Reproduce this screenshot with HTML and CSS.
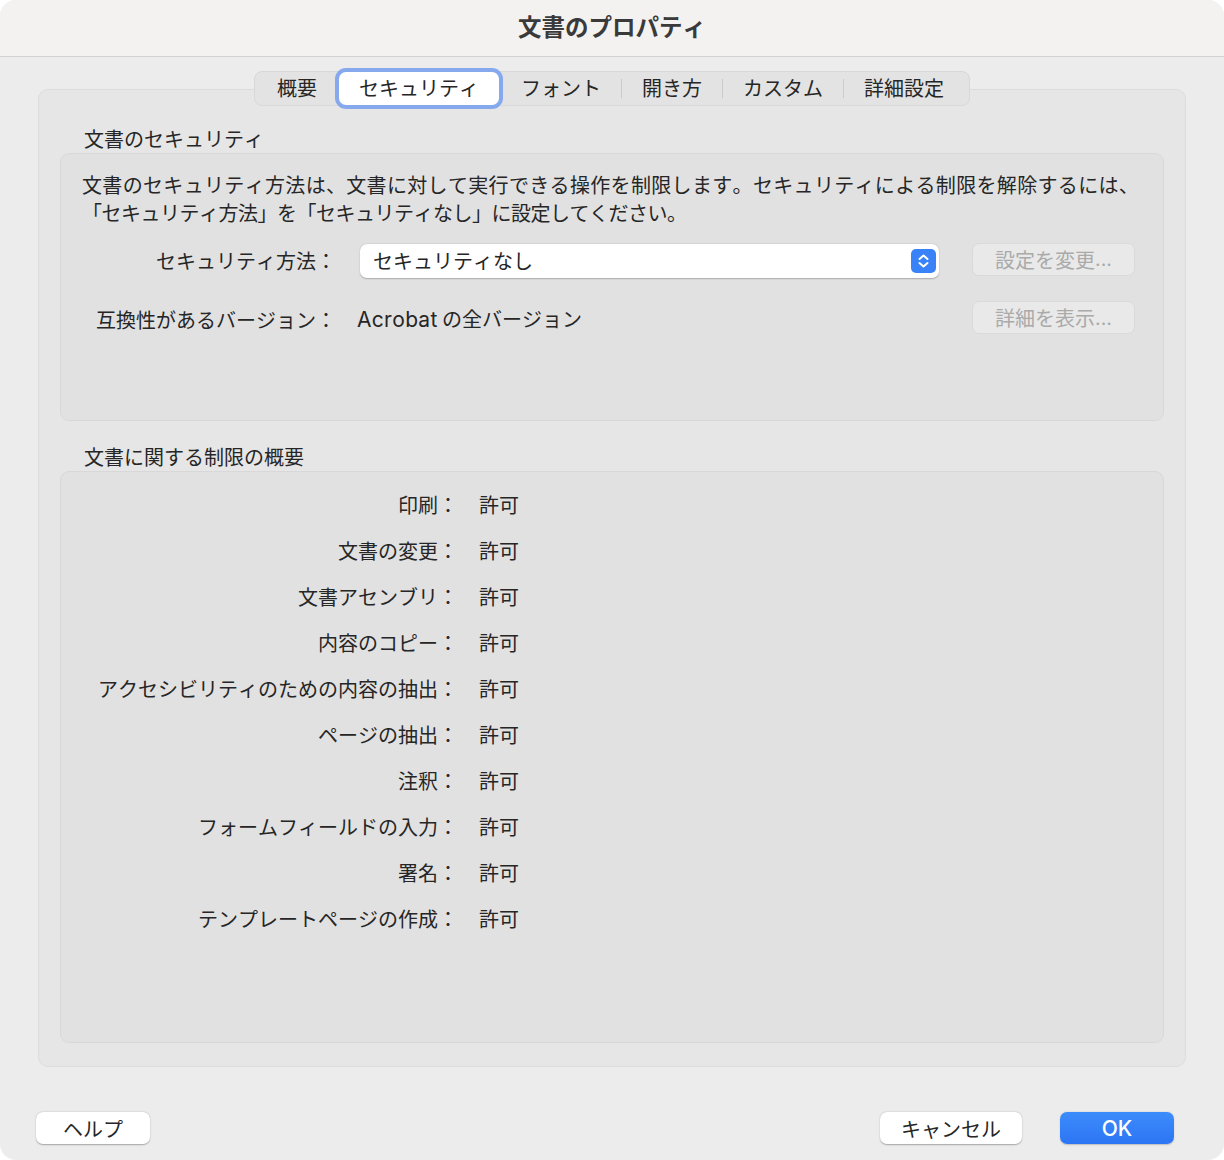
FILE: index.html
```html
<!DOCTYPE html>
<html lang="ja">
<head>
<meta charset="utf-8">
<title>文書のプロパティ</title>
<link rel="stylesheet" href="styles.css">
</head>
<body>
<div class="window">
  <div class="titlebar">文書のプロパティ</div>
  <div class="tabview">
    <div class="tabs">
      <div class="tab">概要</div>
      <div class="tab selected">セキュリティ</div>
      <div class="tab">フォント</div>
      <div class="sep"></div>
      <div class="tab">開き方</div>
      <div class="sep"></div>
      <div class="tab">カスタム</div>
      <div class="sep"></div>
      <div class="tab">詳細設定</div>
    </div>
    <div class="tabbox">
      <div class="section-label">文書のセキュリティ</div>
      <div class="group group-security">
        <p class="desc"><span class="line-wide">文書のセキュリティ方法は、文書に対して実行できる操作を制限します。セキュリティによる制限を解除するには、</span><br><span class="line-narrow">「セキュリティ方法」を「セキュリティなし」に設定してください。</span></p>
        <div class="form-rows">
          <div class="form-label">セキュリティ方法：</div>
          <div class="select">
            <span>セキュリティなし</span>
            <span class="stepper">
              <svg width="25" height="24" viewBox="0 0 25 24"><path d="M8.5 10 L12.5 6.5 L16.5 10" fill="none" stroke="#fff" stroke-width="2" stroke-linecap="round" stroke-linejoin="round"/><path d="M8.5 14 L12.5 17.5 L16.5 14" fill="none" stroke="#fff" stroke-width="2" stroke-linecap="round" stroke-linejoin="round"/></svg>
            </span>
          </div>
          <div class="btn disabled">設定を変更<span class="latin">...</span></div>
          <div class="form-label">互換性があるバージョン：</div>
          <div class="form-value"><span class="latin app">Acrobat</span> の全バージョン</div>
          <div class="btn disabled">詳細を表示<span class="latin">...</span></div>
        </div>
      </div>
      <div class="section-label">文書に関する制限の概要</div>
      <div class="group group-summary">
        <div class="summary">
          <div class="s-label">印刷：</div><div class="s-value">許可</div>
          <div class="s-label">文書の変更：</div><div class="s-value">許可</div>
          <div class="s-label">文書アセンブリ：</div><div class="s-value">許可</div>
          <div class="s-label">内容のコピー：</div><div class="s-value">許可</div>
          <div class="s-label">アクセシビリティのための内容の抽出：</div><div class="s-value">許可</div>
          <div class="s-label">ページの抽出：</div><div class="s-value">許可</div>
          <div class="s-label">注釈：</div><div class="s-value">許可</div>
          <div class="s-label">フォームフィールドの入力：</div><div class="s-value">許可</div>
          <div class="s-label">署名：</div><div class="s-value">許可</div>
          <div class="s-label">テンプレートページの作成：</div><div class="s-value">許可</div>
        </div>
      </div>
    </div>
  </div>
  <div class="footer">
    <div class="btn push help">ヘルプ</div>
    <div class="footer-right">
      <div class="btn push cancel">キャンセル</div>
      <div class="btn push ok"><span class="latin">OK</span></div>
    </div>
  </div>
</div>
</body>
</html>
```
FILE: styles.css
```css
* { box-sizing: border-box; }
html, body { margin: 0; padding: 0; background: #ffffff; }
body {
  font-family: "Noto Sans CJK JP", "Noto Sans", sans-serif;
  color: #262626;
  font-size: 20px;
  font-kerning: none;
  font-feature-settings: "palt" 0, "kern" 0;
}
.latin {
  font-family: "Inter", "Noto Sans CJK JP", sans-serif;
  font-size: 19.5px;
}
.latin.app {
  font-size: 21px;
  letter-spacing: 0.3px;
}
.window {
  width: 1224px;
  height: 1160px;
  background: #ececec;
  border-radius: 16px;
  overflow: hidden;
  display: flex;
  flex-direction: column;
}
.titlebar {
  height: 57px;
  flex: none;
  background: #f3f2f1;
  border-bottom: 1px solid #d2d2d2;
  display: flex;
  align-items: center;
  justify-content: center;
  font-size: 23.5px;
  font-weight: bold;
  color: #3a3a3a;
  padding-bottom: 5px;
}
.tabview {
  padding: 14px 38px 0;
}
.tabs {
  position: relative;
  z-index: 1;
  width: 716px;
  height: 35px;
  margin: 0 auto -17px;
  display: flex;
  align-items: center;
  padding: 0 4px 0 2px;
  background: #e3e3e3;
  border: 1px solid #d8d8d8;
  border-radius: 8px;
}
.tab {
  height: 33px;
  line-height: 32px;
  padding: 0 20px;
  font-size: 20px;
  color: #262626;
  white-space: nowrap;
}
.tab.selected {
  background: #ffffff;
  border-radius: 7px;
  margin: 0 2px;
  box-shadow: 0 0 0 4px #86a9ee;
}
.sep {
  width: 1px;
  height: 19px;
  background: #cbcbcb;
}
.tabbox {
  height: 978px;
  background: #e6e6e6;
  border: 1px solid #dcdcdc;
  border-radius: 10px;
  padding: 35px 21px 0;
}
.section-label {
  font-size: 20px;
  line-height: 28px;
  padding-left: 24px;
}
.group {
  background: #e1e1e1;
  border: 1px solid #d8d8d8;
  border-radius: 9px;
}
.group-security {
  height: 268px;
  margin-bottom: 22px;
}
.desc {
  margin: 0;
  padding: 17px 21px 0;
  font-size: 20px;
  line-height: 28px;
  white-space: nowrap;
}
.line-wide { letter-spacing: 0.33px; }
.line-narrow { letter-spacing: -0.5px; }
.form-rows {
  display: grid;
  grid-template-columns: 275px 603px 196px;
  row-gap: 24px;
  margin-top: 17px;
  align-items: center;
}
.form-label {
  text-align: right;
  line-height: 34px;
}
.select {
  margin-left: 24px;
  height: 34px;
  background: #ffffff;
  border-radius: 7px;
  box-shadow: 0 0.5px 1.5px rgba(0,0,0,0.25);
  display: flex;
  align-items: center;
  justify-content: space-between;
  padding: 0 3px 0 13px;
  width: 579px;
  line-height: 34px;
}
.form-value {
  margin-left: 21px;
  line-height: 34px;
}
.stepper {
  width: 25px;
  height: 24px;
  background: #3a82f7;
  border-radius: 5px;
  display: flex;
}
.btn {
  height: 33px;
  border-radius: 7px;
  display: flex;
  align-items: center;
  justify-content: center;
  font-size: 20px;
  white-space: nowrap;
}
.form-rows .btn { margin-left: 33px; width: 163px; margin-top: -4px; }
.btn.disabled {
  background: #e9e9e9;
  border: 1px solid #dadada;
  color: #aaaaaa;
}
.group-summary {
  height: 572px;
  padding-top: 19px;
}
.summary {
  display: grid;
  grid-template-columns: 397px auto;
  column-gap: 21px;
  row-gap: 18px;
  justify-content: start;
}
.s-label {
  text-align: right;
  line-height: 28px;
}
.s-value { line-height: 28px; }
.footer {
  display: flex;
  justify-content: space-between;
  padding: 45px 50px 0 36px;
}
.footer-right {
  display: flex;
  gap: 38px;
}
.btn.push {
  height: 32px;
  background: #ffffff;
  box-shadow: 0 0.5px 1.5px rgba(0,0,0,0.3);
  color: #262626;
}
.help { width: 114px; }
.cancel { width: 142px; }
.btn.ok {
  width: 114px;
  background: linear-gradient(#3d8cfb, #2d75f4);
  color: #ffffff;
  box-shadow: 0 0.5px 1.5px rgba(0,0,0,0.2);
}
.btn.ok .latin {
  font-size: 21px;
  font-weight: 500;
}
```
